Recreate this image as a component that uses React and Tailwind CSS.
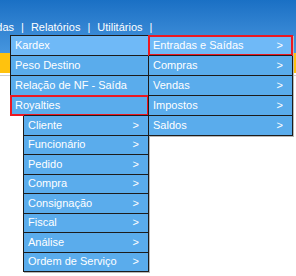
import React from 'react';

const kardex = ['Entradas e Saídas', 'Compras', 'Vendas', 'Impostos', 'Saldos'];
const royalties = ['Cliente', 'Funcionário', 'Pedido', 'Compra', 'Consignação', 'Fiscal', 'Análise', 'Ordem de Serviço'];

function Item({ label, arrow, hover, marked, tall = true }) {
  return (
    <div
      className={`relative flex items-center justify-between border-t border-[#1c1c1c] pl-[4px] pr-[9px] ${
        tall ? 'h-[20px]' : 'h-[19.5px]'
      } ${hover ? 'bg-[#6fb9f7]' : 'bg-[#5aacec]'}`}
    >
      <span className="leading-none">{label}</span>
      {arrow && <span className="leading-none">&gt;</span>}
      {marked && <span className="pointer-events-none absolute -left-px -right-px -top-px -bottom-px border-2 border-[#ec1821]" />}
    </div>
  );
}

export default function App() {
  return (
    <div className="relative h-[276px] w-[296px] overflow-hidden bg-white font-['Liberation_Sans',Arial,sans-serif] text-[11px] text-white">
      <div className="h-[53px] bg-gradient-to-b from-[#1a70c4] to-[#4696df] pt-[19px]">
        <nav className="-ml-[30px] flex gap-[7px] whitespace-nowrap">
          <span>Entradas</span>
          <span>|</span>
          <span>Relatórios</span>
          <span>|</span>
          <span>Utilitários</span>
          <span>|</span>
        </nav>
      </div>
      <div className="h-[20px] bg-[#ffc20e]" />
      <div className="mt-[2px] h-px bg-[#cfcfcf]" />

      {/* first level */}
      <div className="absolute left-[10px] top-[35px] w-[139px] border-x border-b border-[#1c1c1c]">
        <Item label="Kardex" hover />
        <Item label="Peso Destino" />
        <Item label="Relação de NF - Saída" />
        <Item label="Royalties" marked />
      </div>

      {/* Royalties submenu */}
      <div className="absolute left-[23px] top-[116px] w-[126px] border-x border-b border-[#1c1c1c] shadow-[1px_1px_0_#b8b8b8]">
        {royalties.map((r, i) => (
          <div key={r} className={i === 0 ? '-mt-px' : ''}>
            <Item label={r} arrow tall={false} />
          </div>
        ))}
      </div>

      {/* Kardex submenu */}
      <div className="absolute left-[148px] top-[35px] w-[145px] border-x border-b border-[#1c1c1c] shadow-[1px_1px_0_#b8b8b8]">
        {kardex.map((k, i) => (
          <Item key={k} label={k} arrow hover={i === 0} marked={i === 0} />
        ))}
      </div>
    </div>
  );
}
